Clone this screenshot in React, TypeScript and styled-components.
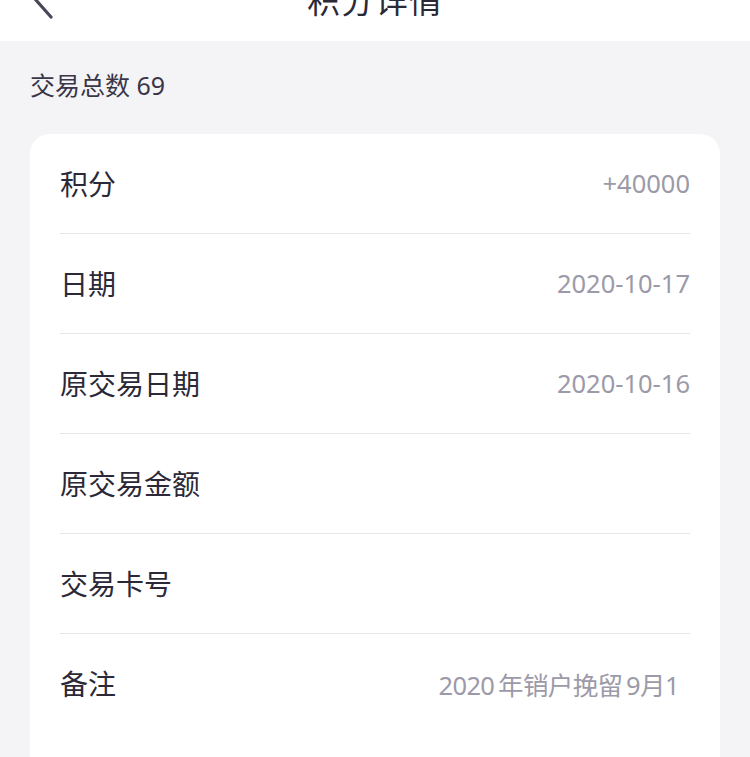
import React from 'react';
import styled, { createGlobalStyle } from 'styled-components';

const rows = [
  { label: '积分', value: '+40000' },
  { label: '日期', value: '2020-10-17' },
  { label: '原交易日期', value: '2020-10-16' },
  { label: '原交易金额', value: '' },
  { label: '交易卡号', value: '' },
  { label: '备注', value: '2020\u2009年销户挽留\u20099月1', note: true },
];

const App = () => (
  <Page>
    <GlobalStyle />
    <Header>
      <NavBar>
        <BackButton>
          <svg width="24" height="40" viewBox="0 0 24 40" fill="none">
            <polyline
              points="20,2 4,20 20,38"
              stroke="#4a4658"
              strokeWidth="3.2"
              strokeLinecap="round"
              strokeLinejoin="round"
            />
          </svg>
        </BackButton>
        <Title>积分详情</Title>
      </NavBar>
    </Header>
    <Total>交易总数 69</Total>
    <Card>
      {rows.map((r, idx) => (
        <Row key={`row-${idx}`} last={idx === rows.length - 1}>
          <Label>{r.label}</Label>
          <Value note={r.note}>{r.value}</Value>
        </Row>
      ))}
    </Card>
  </Page>
);

const GlobalStyle = createGlobalStyle`
  html, body {
    margin: 0;
    padding: 0;
    background: #f4f4f7;
  }
  body {
    font-family: "Noto Sans", "Noto Sans CJK SC", sans-serif;
    -webkit-font-smoothing: antialiased;
  }
`;

const Page = styled.div`
  min-height: 757px;
  background: #f4f4f7;
  overflow: hidden;
`;

const Header = styled.div`
  height: 41px;
  background: #ffffff;
  overflow: hidden;
`;

const NavBar = styled.div`
  height: 84px;
  margin-top: -43px;
  position: relative;
  display: flex;
  align-items: center;
  justify-content: center;
`;

const BackButton = styled.div`
  position: absolute;
  left: 31px;
  top: 22px;
  display: flex;
`;

const Title = styled.div`
  font-size: 33px;
  color: #2b2937;
  letter-spacing: 1px;
`;

const Total = styled.div`
  padding: 29px 30px 0;
  height: 63px;
  box-sizing: border-box;
  font-size: 25px;
  line-height: 30px;
  color: #3a3648;
`;

const Card = styled.div`
  margin: 30px 30px 0;
  background: #ffffff;
  border-radius: 20px;
  padding: 0 30px 60px;
`;

const Row = styled.div<{ last?: boolean }>`
  height: 100px;
  box-sizing: border-box;
  display: flex;
  align-items: center;
  justify-content: space-between;
  padding-bottom: 2px;
  border-bottom: ${({ last }) => (last ? 'none' : '1px solid #e6e6ea')};
`;

const Label = styled.div`
  font-size: 28px;
  color: #2b2937;
`;

const Value = styled.div<{ note?: boolean }>`
  font-size: 25.5px;
  color: #9c9aa8;
  letter-spacing: ${({ note }) => (note ? '-0.6px' : '0')};
  padding-right: ${({ note }) => (note ? '11px' : '0')};
`;

export default App;
